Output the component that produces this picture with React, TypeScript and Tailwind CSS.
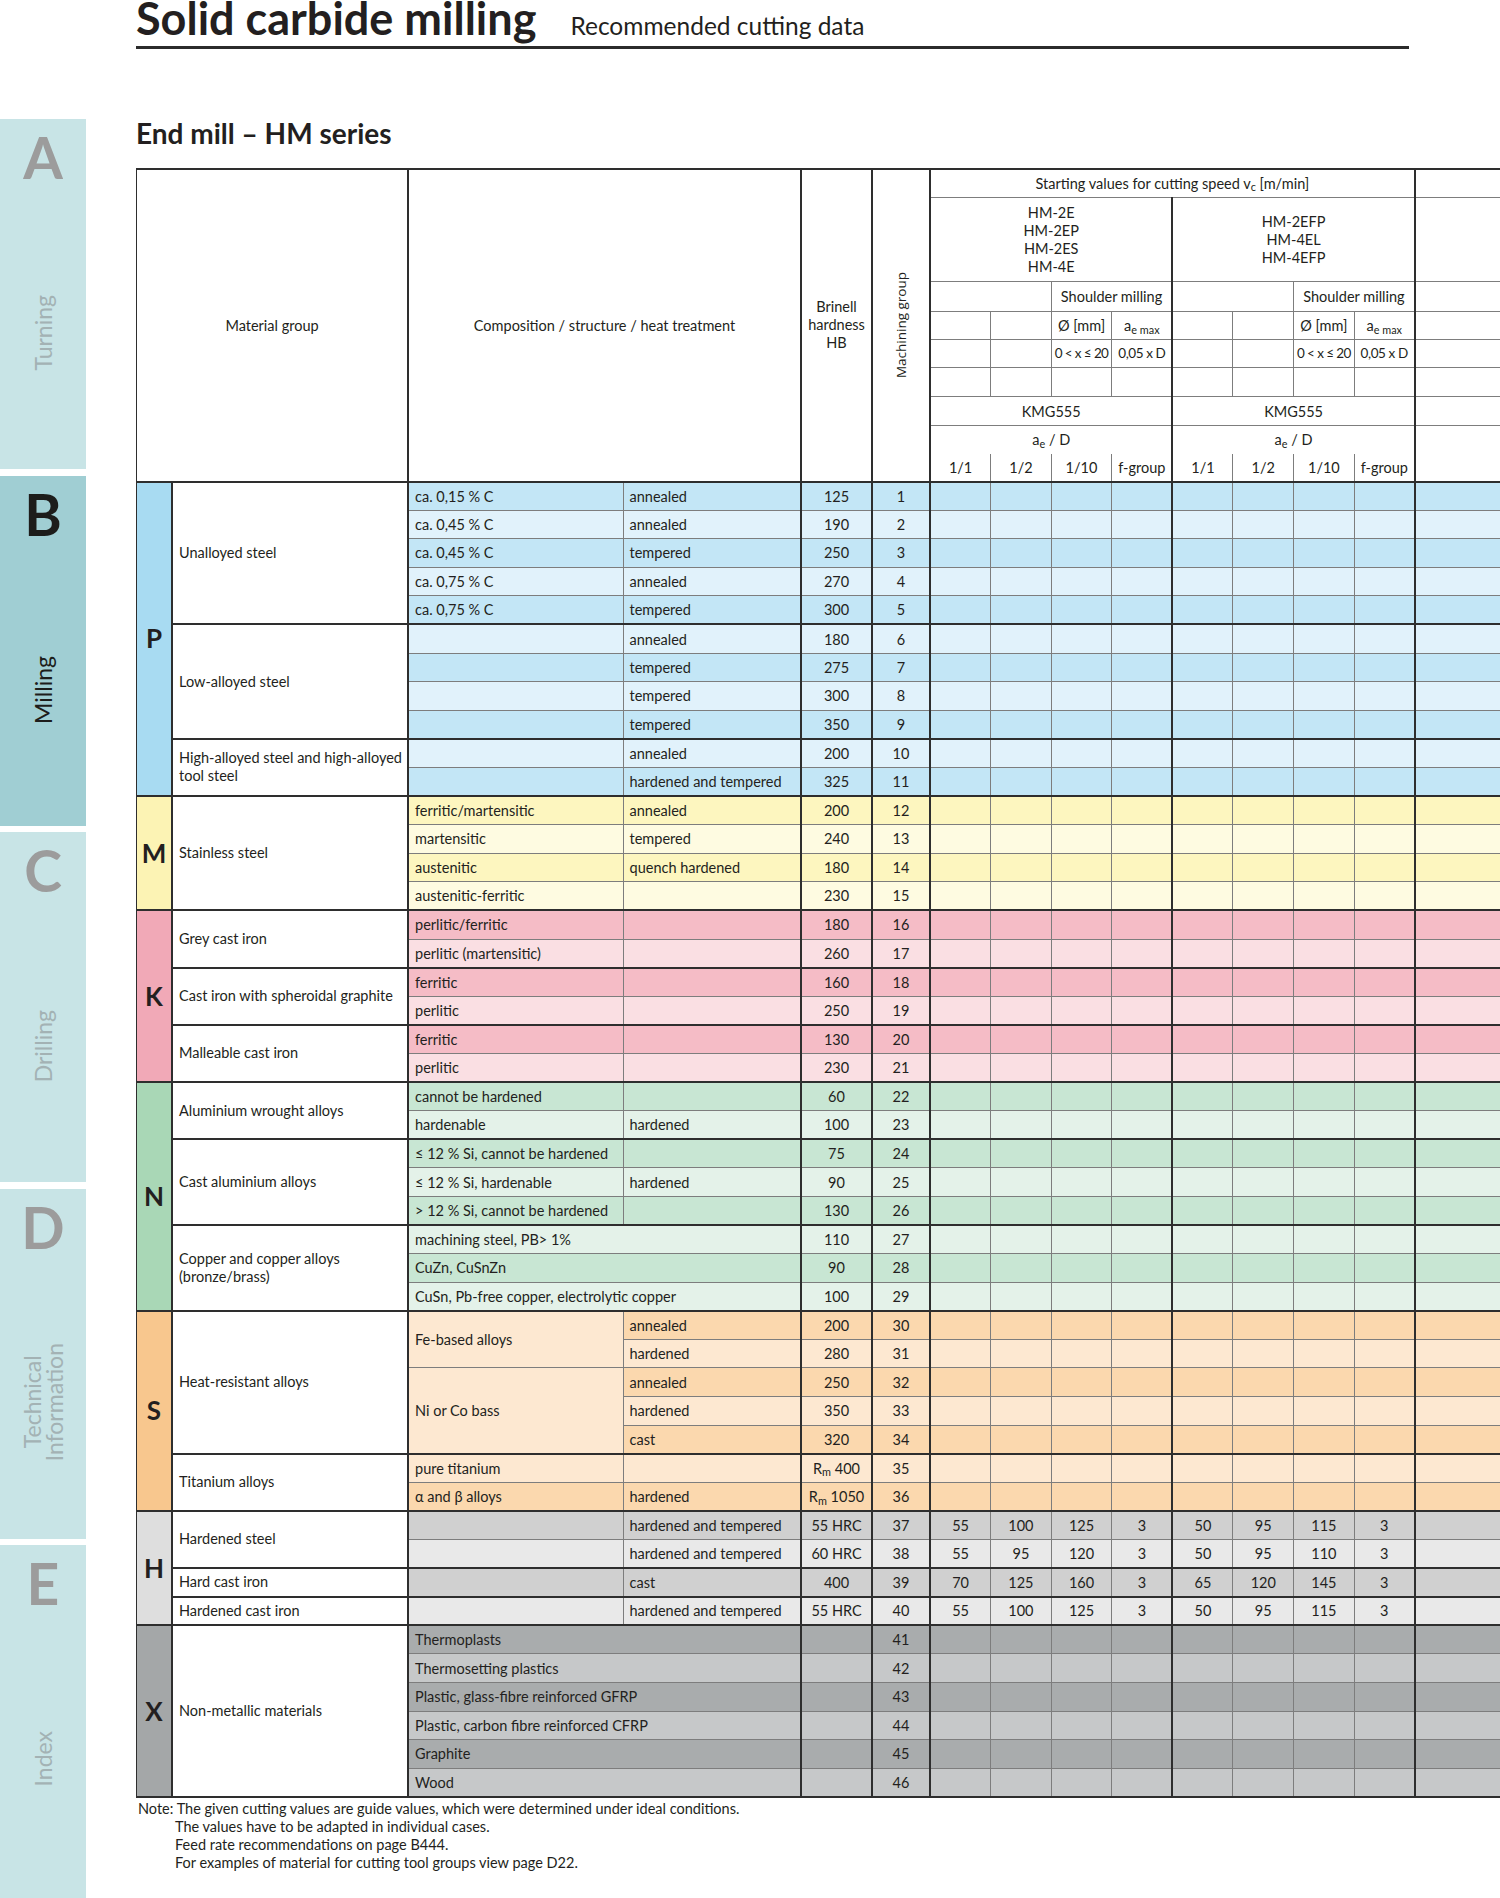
import React from "react";

type Tone = { letter: string; dark: string; light: string };

type Row = {
  c1?: React.ReactNode;
  c1Rows?: number;
  skip?: boolean;
  c2?: React.ReactNode;
  wide?: boolean;
  hb: React.ReactNode;
  n: number;
  v?: string[];
};

type Material = { name: React.ReactNode; rows: Row[] };
type Group = { letter: string; tone: Tone; materials: Material[] };

const thin = "border border-[#7d7d7d]";
const R = "border-r-2 border-r-[#2e2e2e]";
const B = "border-b-2 border-b-[#2e2e2e]";

const Rm = ({ v }: { v: string }) => (
  <span>
    R<sub>m</sub> {v}
  </span>
);

const groups: Group[] = [
  {
    letter: "P",
    tone: { letter: "bg-[#a8dbf2]", dark: "bg-[#c3e6f6]", light: "bg-[#e1f2fb]" },
    materials: [
      {
        name: "Unalloyed steel",
        rows: [
          { c1: "ca. 0,15 % C", c2: "annealed", hb: "125", n: 1 },
          { c1: "ca. 0,45 % C", c2: "annealed", hb: "190", n: 2 },
          { c1: "ca. 0,45 % C", c2: "tempered", hb: "250", n: 3 },
          { c1: "ca. 0,75 % C", c2: "annealed", hb: "270", n: 4 },
          { c1: "ca. 0,75 % C", c2: "tempered", hb: "300", n: 5 },
        ],
      },
      {
        name: "Low-alloyed steel",
        rows: [
          { c2: "annealed", hb: "180", n: 6 },
          { c2: "tempered", hb: "275", n: 7 },
          { c2: "tempered", hb: "300", n: 8 },
          { c2: "tempered", hb: "350", n: 9 },
        ],
      },
      {
        name: (
          <span className="whitespace-nowrap">
            High-alloyed steel and high-alloyed
            <br />
            tool steel
          </span>
        ),
        rows: [
          { c2: "annealed", hb: "200", n: 10 },
          { c2: "hardened and tempered", hb: "325", n: 11 },
        ],
      },
    ],
  },
  {
    letter: "M",
    tone: { letter: "bg-[#fcf3b4]", dark: "bg-[#fdf6bf]", light: "bg-[#fefbe1]" },
    materials: [
      {
        name: "Stainless steel",
        rows: [
          { c1: "ferritic/martensitic", c2: "annealed", hb: "200", n: 12 },
          { c1: "martensitic", c2: "tempered", hb: "240", n: 13 },
          { c1: "austenitic", c2: "quench hardened", hb: "180", n: 14 },
          { c1: "austenitic-ferritic", hb: "230", n: 15 },
        ],
      },
    ],
  },
  {
    letter: "K",
    tone: { letter: "bg-[#f1a9b7]", dark: "bg-[#f5bcc6]", light: "bg-[#fadfe3]" },
    materials: [
      {
        name: "Grey cast iron",
        rows: [
          { c1: "perlitic/ferritic", hb: "180", n: 16 },
          { c1: "perlitic (martensitic)", hb: "260", n: 17 },
        ],
      },
      {
        name: "Cast iron with spheroidal graphite",
        rows: [
          { c1: "ferritic", hb: "160", n: 18 },
          { c1: "perlitic", hb: "250", n: 19 },
        ],
      },
      {
        name: "Malleable cast iron",
        rows: [
          { c1: "ferritic", hb: "130", n: 20 },
          { c1: "perlitic", hb: "230", n: 21 },
        ],
      },
    ],
  },
  {
    letter: "N",
    tone: { letter: "bg-[#a9d7b6]", dark: "bg-[#c8e6d3]", light: "bg-[#e4f2e9]" },
    materials: [
      {
        name: "Aluminium wrought alloys",
        rows: [
          { c1: "cannot be hardened", hb: "60", n: 22 },
          { c1: "hardenable", c2: "hardened", hb: "100", n: 23 },
        ],
      },
      {
        name: "Cast aluminium alloys",
        rows: [
          { c1: "≤ 12 % Si, cannot be hardened", hb: "75", n: 24 },
          { c1: "≤ 12 % Si, hardenable", c2: "hardened", hb: "90", n: 25 },
          { c1: "> 12 % Si, cannot be hardened", hb: "130", n: 26 },
        ],
      },
      {
        name: (
          <span>
            Copper and copper alloys
            <br />
            (bronze/brass)
          </span>
        ),
        rows: [
          { c1: "machining steel, PB> 1%", wide: true, hb: "110", n: 27 },
          { c1: "CuZn, CuSnZn", wide: true, hb: "90", n: 28 },
          { c1: "CuSn, Pb-free copper, electrolytic copper", wide: true, hb: "100", n: 29 },
        ],
      },
    ],
  },
  {
    letter: "S",
    tone: { letter: "bg-[#f8c78e]", dark: "bg-[#fbd8ae]", light: "bg-[#fde8d1]" },
    materials: [
      {
        name: "Heat-resistant alloys",
        rows: [
          { c1: "Fe-based alloys", c1Rows: 2, c2: "annealed", hb: "200", n: 30 },
          { skip: true, c2: "hardened", hb: "280", n: 31 },
          { c1: "Ni or Co bass", c1Rows: 3, c2: "annealed", hb: "250", n: 32 },
          { skip: true, c2: "hardened", hb: "350", n: 33 },
          { skip: true, c2: "cast", hb: "320", n: 34 },
        ],
      },
      {
        name: "Titanium alloys",
        rows: [
          { c1: "pure titanium", hb: <Rm v="400" />, n: 35 },
          { c1: "α and β alloys", c2: "hardened", hb: <Rm v="1050" />, n: 36 },
        ],
      },
    ],
  },
  {
    letter: "H",
    tone: { letter: "bg-[#dedede]", dark: "bg-[#d0d0d0]", light: "bg-[#e9e9e9]" },
    materials: [
      {
        name: "Hardened steel",
        rows: [
          { c2: "hardened and tempered", hb: "55 HRC", n: 37, v: ["55", "100", "125", "3", "50", "95", "115", "3"] },
          { c2: "hardened and tempered", hb: "60 HRC", n: 38, v: ["55", "95", "120", "3", "50", "95", "110", "3"] },
        ],
      },
      {
        name: "Hard cast iron",
        rows: [{ c2: "cast", hb: "400", n: 39, v: ["70", "125", "160", "3", "65", "120", "145", "3"] }],
      },
      {
        name: "Hardened cast iron",
        rows: [
          { c2: "hardened and tempered", hb: "55 HRC", n: 40, v: ["55", "100", "125", "3", "50", "95", "115", "3"] },
        ],
      },
    ],
  },
  {
    letter: "X",
    tone: { letter: "bg-[#a4a7a8]", dark: "bg-[#a9acad]", light: "bg-[#c6c8c9]" },
    materials: [
      {
        name: "Non-metallic materials",
        rows: [
          { c1: "Thermoplasts", wide: true, hb: "", n: 41 },
          { c1: "Thermosetting plastics", wide: true, hb: "", n: 42 },
          { c1: "Plastic, glass-fibre reinforced GFRP", wide: true, hb: "", n: 43 },
          { c1: "Plastic, carbon fibre reinforced CFRP", wide: true, hb: "", n: 44 },
          { c1: "Graphite", wide: true, hb: "", n: 45 },
          { c1: "Wood", wide: true, hb: "", n: 46 },
        ],
      },
    ],
  },
];

function Tab({ letter, label, active, last }: { letter: string; label: React.ReactNode; active?: boolean; last?: boolean }) {
  return (
    <div
      className={`${active ? "bg-[#a0ced3]" : "bg-[#c8e4e6]"} ${last ? "flex-1" : "h-[350px]"} w-[86px] flex flex-col items-center overflow-hidden`}
    >
      <div
        className={`h-[100px] pt-[10px] text-[57px] leading-[56px] font-bold ${active ? "text-[#1d1d1b]" : "text-[#9c9c9c]"}`}
      >
        {letter}
      </div>
      <div className="h-[228px] flex items-center justify-center">
        <div
          className={`[writing-mode:vertical-rl] rotate-180 text-[23px] leading-[22px] text-center ${active ? "text-[#1d1d1b]" : "text-[#a3b2b4]"}`}
        >
          {label}
        </div>
      </div>
    </div>
  );
}

function BodyRows() {
  const out: React.ReactNode[] = [];
  groups.forEach((g) => {
    const total = g.materials.reduce((s, m) => s + m.rows.length, 0);
    let gi = 0;
    g.materials.forEach((m, mi) => {
      m.rows.forEach((r, ri) => {
        const last = ri === m.rows.length - 1;
        const bb = last ? B : "";
        const bg = gi % 2 === 0 ? g.tone.dark : g.tone.light;
        gi++;
        const cell = `${thin} ${bb} ${bg}`;
        out.push(
          <tr key={r.n} className="h-[28.6px]">
            {mi === 0 && ri === 0 && (
              <td
                rowSpan={total}
                className={`${thin} ${R} ${B} border-l-2 border-l-[#2e2e2e] ${g.tone.letter} text-center text-[26px] font-bold`}
              >
                {g.letter}
              </td>
            )}
            {ri === 0 && (
              <td rowSpan={m.rows.length} className={`${thin} ${R} ${B} bg-white px-[6px] leading-[18px]`}>
                {m.name}
              </td>
            )}
            {r.wide ? (
              <td colSpan={2} className={`${cell} ${R} px-[6px]`}>
                {r.c1}
              </td>
            ) : (
              <>
                {!r.skip && (
                  <td
                    rowSpan={r.c1Rows ?? 1}
                    className={`${thin} ${r.c1Rows ? (r.n === 32 ? B : "") : bb} ${r.c1Rows ? g.tone.light : bg} px-[6px]`}
                  >
                    {r.c1}
                  </td>
                )}
                <td className={`${cell} ${R} px-[6px]`}>{r.c2}</td>
              </>
            )}
            <td className={`${cell} ${R} text-center whitespace-nowrap`}>{r.hb}</td>
            <td className={`${cell} ${R} text-center`}>{r.n}</td>
            {Array.from({ length: 8 }).map((_, i) => (
              <td key={i} className={`${cell} ${i === 3 || i === 7 ? R : ""} text-center`}>
                {r.v ? r.v[i] : ""}
              </td>
            ))}
            <td className={`${cell} ${R}`} />
          </tr>
        );
      });
    });
  });
  return <>{out}</>;
}

export default function App() {
  const h = `${thin} font-normal`;
  const top = "border-t-2 border-t-[#2e2e2e]";
  return (
    <div className="w-[1500px] h-[1898px] overflow-hidden bg-white flex font-['Lato',sans-serif] text-[#231f20]">
      <aside className="w-[86px] shrink-0 pt-[119px] flex flex-col gap-[6.5px]">
        <Tab letter="A" label="Turning" />
        <Tab letter="B" label="Milling" active />
        <Tab letter="C" label="Drilling" />
        <Tab
          letter="D"
          label={
            <>
              Technical
              <br />
              Information
            </>
          }
        />
        <Tab letter="E" label="Index" last />
      </aside>

      <main className="ml-[50px] w-[1364px] overflow-hidden">
        <div className="flex items-baseline h-[36px]">
          <h1 className="text-[45px] leading-[36px] font-bold">Solid carbide milling</h1>
          <span className="ml-[34px] text-[24.5px] leading-[30px]">Recommended cutting data</span>
        </div>
        <div className="mt-[10px] w-[1273px] h-[2.5px] bg-[#2b2b2b]" />
        <h2 className="mt-[70px] text-[28px] leading-[28px] font-bold">End mill – HM series</h2>

        <table className="mt-[21px] ml-[-1px] w-[1398px] table-fixed border-collapse text-[14.5px] leading-[17px]">
          <colgroup>
            <col className="w-[36px]" />
            <col className="w-[236px]" />
            <col className="w-[215px]" />
            <col className="w-[178px]" />
            <col className="w-[71px]" />
            <col className="w-[58px]" />
            <col className="w-[60.6px]" />
            <col className="w-[60.6px]" />
            <col className="w-[60.6px]" />
            <col className="w-[60.6px]" />
            <col className="w-[60.6px]" />
            <col className="w-[60.6px]" />
            <col className="w-[60.6px]" />
            <col className="w-[60.6px]" />
            <col className="w-[120px]" />
          </colgroup>
          <thead>
            <tr className="h-[29px]">
              <th rowSpan={9} colSpan={2} className={`${h} ${R} ${B} ${top} border-l-2 border-l-[#2e2e2e]`}>
                Material group
              </th>
              <th rowSpan={9} colSpan={2} className={`${h} ${R} ${B} ${top}`}>
                Composition / structure / heat treatment
              </th>
              <th rowSpan={9} className={`${h} ${R} ${B} ${top} leading-[18px]`}>
                Brinell
                <br />
                hardness
                <br />
                HB
              </th>
              <th rowSpan={9} className={`${h} ${R} ${B} ${top}`}>
                <div className="flex justify-center">
                  <div className="[writing-mode:vertical-rl] rotate-180 font-['Open_Sans',sans-serif] text-[13.5px] leading-[15px] whitespace-nowrap">
                    Machining group
                  </div>
                </div>
              </th>
              <th colSpan={8} className={`${h} ${R} ${top}`}>
                Starting values for cutting speed v<sub>c</sub> [m/min]
              </th>
              <th className={`${h} ${R} ${top}`} />
            </tr>
            <tr className="h-[84px]">
              <th colSpan={4} className={`${h} ${R} leading-[18px]`}>
                HM-2E
                <br />
                HM-2EP
                <br />
                HM-2ES
                <br />
                HM-4E
              </th>
              <th colSpan={4} className={`${h} ${R} leading-[18px]`}>
                HM-2EFP
                <br />
                HM-4EL
                <br />
                HM-4EFP
              </th>
              <th className={`${h} ${R}`} />
            </tr>
            <tr className="h-[30px]">
              {[0, 1].map((k) => (
                <React.Fragment key={k}>
                  <th colSpan={2} className={h} />
                  <th colSpan={2} className={`${h} ${R} whitespace-nowrap`}>
                    Shoulder milling
                  </th>
                </React.Fragment>
              ))}
              <th className={`${h} ${R}`} />
            </tr>
            <tr className="h-[28px]">
              {[0, 1].map((k) => (
                <React.Fragment key={k}>
                  <th className={h} />
                  <th className={h} />
                  <th className={`${h} whitespace-nowrap`}>Ø [mm]</th>
                  <th className={`${h} ${R} whitespace-nowrap`}>
                    a<sub>e max</sub>
                  </th>
                </React.Fragment>
              ))}
              <th className={`${h} ${R}`} />
            </tr>
            <tr className="h-[28px]">
              {[0, 1].map((k) => (
                <React.Fragment key={k}>
                  <th className={h} />
                  <th className={h} />
                  <th className={`${h} whitespace-nowrap text-[13.5px] tracking-[-0.6px]`}>0 &lt; x ≤ 20</th>
                  <th className={`${h} ${R} whitespace-nowrap text-[13.5px] tracking-[-0.4px]`}>0,05 x D</th>
                </React.Fragment>
              ))}
              <th className={`${h} ${R}`} />
            </tr>
            <tr className="h-[29px]">
              {[0, 1].map((k) => (
                <React.Fragment key={k}>
                  <th className={h} />
                  <th className={h} />
                  <th className={h} />
                  <th className={`${h} ${R}`} />
                </React.Fragment>
              ))}
              <th className={`${h} ${R}`} />
            </tr>
            <tr className="h-[29px]">
              <th colSpan={4} className={`${h} ${R}`}>
                KMG555
              </th>
              <th colSpan={4} className={`${h} ${R}`}>
                KMG555
              </th>
              <th className={`${h} ${R}`} />
            </tr>
            <tr className="h-[28px]">
              <th colSpan={4} className={`${h} ${R} border-b-0`}>
                a<sub>e</sub> / D
              </th>
              <th colSpan={4} className={`${h} ${R} border-b-0`}>
                a<sub>e</sub> / D
              </th>
              <th rowSpan={2} className={`${h} ${R} ${B}`} />
            </tr>
            <tr className="h-[28px]">
              {[0, 1].map((k) => (
                <React.Fragment key={k}>
                  <th className={`${h} ${B} border-t-0`}>1/1</th>
                  <th className={`${h} ${B} border-t-0`}>1/2</th>
                  <th className={`${h} ${B} border-t-0`}>1/10</th>
                  <th className={`${h} ${R} ${B} border-t-0`}>f-group</th>
                </React.Fragment>
              ))}
            </tr>
          </thead>
          <tbody>
            <BodyRows />
          </tbody>
        </table>

        <div className="mt-[2px] text-[14.5px] leading-[18px] ml-[2px]">
          <div>Note: The given cutting values are guide values, which were determined under ideal conditions.</div>
          <div className="pl-[37px]">The values have to be adapted in individual cases.</div>
          <div className="pl-[37px]">Feed rate recommendations on page B444.</div>
          <div className="pl-[37px]">For examples of material for cutting tool groups view page D22.</div>
        </div>
      </main>
    </div>
  );
}
